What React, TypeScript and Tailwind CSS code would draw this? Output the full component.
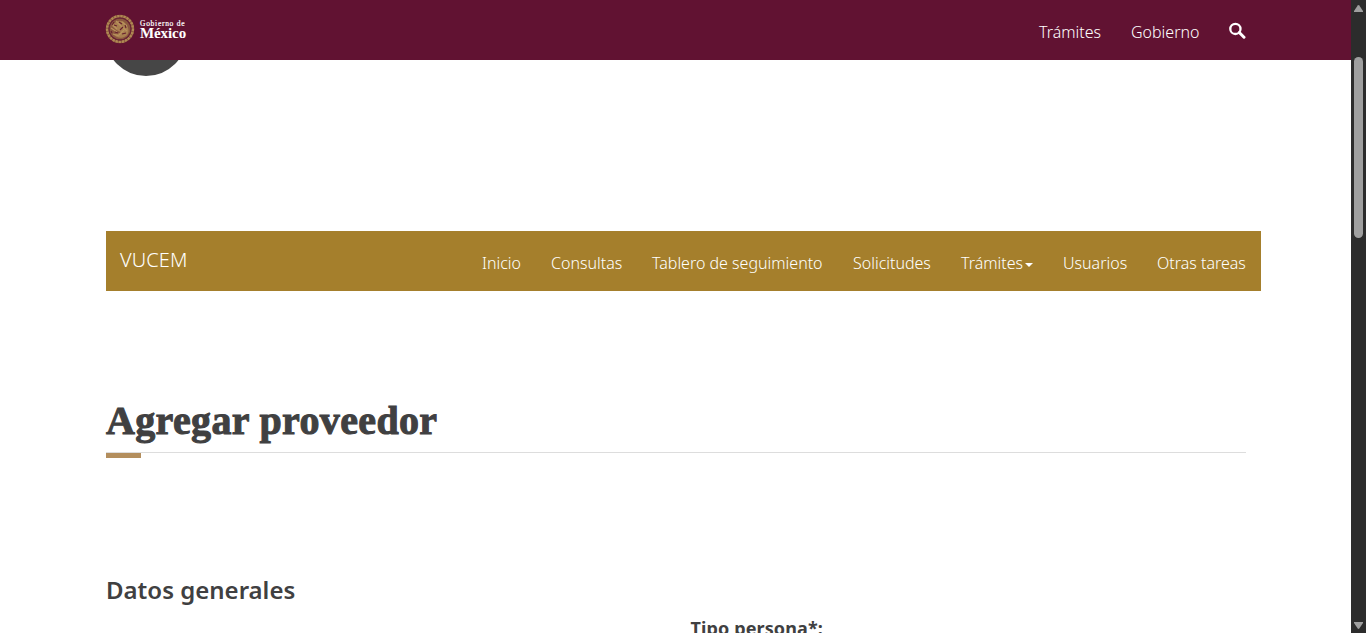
const menu = [
  { label: 'Inicio', box: 'w-[39px]' },
  { label: 'Consultas', box: 'w-[71px]' },
  { label: 'Tablero de seguimiento', box: 'w-[171px]' },
  { label: 'Solicitudes', box: 'w-[78px]' },
  { label: 'Trámites', box: 'w-[72px]', caret: true },
  { label: 'Usuarios', box: 'w-[64px]' },
  { label: 'Otras tareas', box: 'w-[89px]' },
];

function Seal() {
  return (
    <svg width="30" height="30" viewBox="0 0 30 30" fill="none" className="shrink-0">
      <circle cx="15" cy="15" r="12.9" stroke="#8d5b40" strokeWidth="2.7" />
      <circle cx="15" cy="15" r="12.9" stroke="#b08953" strokeWidth="2.4" strokeDasharray="2.2 1" />
      <circle cx="15" cy="15" r="10.6" fill="#8b583f" />
      <path d="M7 12c3-5 9-7 13-3s5 10 1 13-10 2-13-2c3 0 6 0 8-2-4-1-6-3-9-6Z" fill="#a97f50" />
      <path d="M7 10l5 5M6 14l6 4M11 7l5 5M8 20l6 2M17 8l5 4M16 12l6 5M14 21l5-5" stroke="#b8935c" strokeWidth="1.2" />
      <path d="M9 8l-2 3M12 12l-3-1M14 8l3 2M15 16l3-3M10 18l3 1M20 11l1 3M17 20l4-1M6 17l1 2" stroke="#66202f" strokeWidth="1.1" />
      <circle cx="15" cy="15" r="11" stroke="#6b2835" strokeWidth=".9" />
    </svg>
  );
}

function Header() {
  return (
    <header className="flex h-[60px] shrink-0 items-start bg-[#611232] pl-[105px] text-white">
      <div className="flex w-[934px] pt-[14px]">
        <Seal />
        <div className="ml-[5px] pt-[5px] font-['Liberation_Serif',serif]">
          <div className="h-[8px] text-[7.5px] leading-[10px] font-normal tracking-[0.72px] whitespace-nowrap [-webkit-text-stroke:0.2px_white]">Gobierno de</div>
          <div className="text-[15px] leading-[12px] font-bold tracking-[-0.1px]">México</div>
        </div>
      </div>
      <nav className="flex pt-5 text-[16px] leading-6 font-light">
        <a className="w-[92px] whitespace-nowrap">Trámites</a>
        <a className="w-[98px] whitespace-nowrap">Gobierno</a>
        <svg width="17" height="17" viewBox="0 0 17 17" fill="none" stroke="white" className="mt-[2px]">
          <circle cx="6.4" cy="6.9" r="5.1" strokeWidth="2.3" />
          <path d="M10.3 10.5l4.7 4.7" strokeWidth="3" strokeLinecap="round" />
        </svg>
      </nav>
    </header>
  );
}

function Scrollbar() {
  return (
    <div className="flex w-[15px] flex-col items-center bg-[#2c2c2c]">
      <svg width="9" height="7" viewBox="0 0 9 7" className="mt-[5px]" fill="#9f9f9f">
        <path d="M3.7.5q.8-.9 1.6 0L9 6v1H0V6Z" />
      </svg>
      <div className="mt-[45px] h-[181px] w-[9px] rounded-full bg-[#9f9f9f]" />
      <svg width="9" height="7" viewBox="0 0 9 7" className="mt-auto mb-[4px]" fill="#9f9f9f">
        <path d="M3.7 6.5q.8.9 1.6 0L9 1V0H0v1Z" />
      </svg>
    </div>
  );
}

export default function App() {
  return (
    <div className="flex h-[633px] w-[1366px] overflow-hidden bg-white font-['Noto_Sans',sans-serif]">
      <div className="flex flex-1 flex-col overflow-hidden">
        <Header />
        <div className="ml-[105px] flex h-4 w-[82px] shrink-0 items-end overflow-hidden">
          <div className="h-[82px] w-[82px] shrink-0 rounded-full bg-[#464646]" />
        </div>
        <main className="mt-[155px] ml-[106px] w-[1155px] text-[#404041]">
          <div className="flex h-[60px] justify-between bg-[#a57f2c] pr-[15px] pl-[14px] font-light text-white">
            <span className="pt-[15px] text-[20px] leading-7 tracking-[0.1px]">VUCEM</span>
            <nav className="flex items-start gap-[30px] pt-5 text-[16px] leading-6">
              {menu.map((m) => (
                <a key={m.label} className={`flex items-center whitespace-nowrap ${m.box}`}>
                  {m.label}
                  {m.caret && <span className="mt-1 ml-[2px] border-x-4 border-t-4 border-x-transparent border-t-white" />}
                </a>
              ))}
            </nav>
          </div>
          <h1 className="mt-[99px] flex h-[63px] w-[1140px] items-start border-b border-[#dddddd] pt-px font-['Liberation_Serif',serif] text-[40px] leading-[60px] font-bold tracking-[0.35px] whitespace-nowrap [-webkit-text-stroke:1px_#404041]">
            Agregar proveedor
          </h1>
          <div className="h-[5px] w-[35px] bg-[#b38e5d]" />
          <h2 className="mt-[115px] text-[24px] leading-[34px] font-semibold whitespace-nowrap">Datos generales</h2>
          <div className="mt-[9px] ml-[584.5px] text-[18px] leading-[25px] font-bold tracking-[0.12px] whitespace-nowrap">Tipo persona*:</div>
        </main>
      </div>
      <Scrollbar />
    </div>
  );
}
